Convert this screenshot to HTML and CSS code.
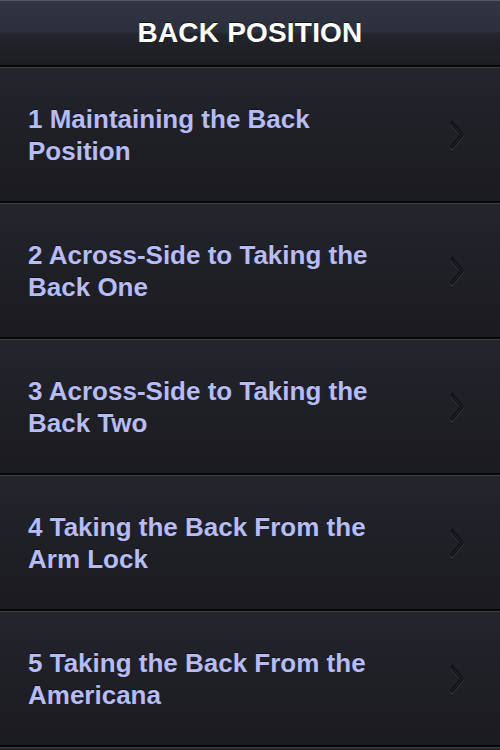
FILE: index.html
```html
<!DOCTYPE html>
<html>
<head>
<meta charset="utf-8">
<link rel="stylesheet" href="styles.css">
</head>
<body>
<div class="screen">
  <header class="navbar"><h1 class="title">BACK POSITION</h1></header>
  <ul class="list">
    <li class="row"><span class="label">1 Maintaining the Back Position</span>
      <svg class="chev" width="18" height="30" viewBox="0 0 18 30"><path d="M4 3 L14 15 L4 27" fill="none" stroke="#3a3b43" stroke-width="4" stroke-linecap="round" stroke-linejoin="round" transform="translate(0 1)"/><path d="M4 3 L14 15 L4 27" fill="none" stroke="#0f0f12" stroke-width="3.6" stroke-linecap="round" stroke-linejoin="round"/><path d="M4 3 L14 15 L4 27" fill="none" stroke="#202126" stroke-width="1.4" stroke-linecap="round" stroke-linejoin="round"/></svg></li>
    <li class="row"><span class="label">2 Across-Side to Taking the Back One</span>
      <svg class="chev" width="18" height="30" viewBox="0 0 18 30"><path d="M4 3 L14 15 L4 27" fill="none" stroke="#3a3b43" stroke-width="4" stroke-linecap="round" stroke-linejoin="round" transform="translate(0 1)"/><path d="M4 3 L14 15 L4 27" fill="none" stroke="#0f0f12" stroke-width="3.6" stroke-linecap="round" stroke-linejoin="round"/><path d="M4 3 L14 15 L4 27" fill="none" stroke="#202126" stroke-width="1.4" stroke-linecap="round" stroke-linejoin="round"/></svg></li>
    <li class="row"><span class="label">3 Across-Side to Taking the Back Two</span>
      <svg class="chev" width="18" height="30" viewBox="0 0 18 30"><path d="M4 3 L14 15 L4 27" fill="none" stroke="#3a3b43" stroke-width="4" stroke-linecap="round" stroke-linejoin="round" transform="translate(0 1)"/><path d="M4 3 L14 15 L4 27" fill="none" stroke="#0f0f12" stroke-width="3.6" stroke-linecap="round" stroke-linejoin="round"/><path d="M4 3 L14 15 L4 27" fill="none" stroke="#202126" stroke-width="1.4" stroke-linecap="round" stroke-linejoin="round"/></svg></li>
    <li class="row"><span class="label">4 Taking the Back From the Arm Lock</span>
      <svg class="chev" width="18" height="30" viewBox="0 0 18 30"><path d="M4 3 L14 15 L4 27" fill="none" stroke="#3a3b43" stroke-width="4" stroke-linecap="round" stroke-linejoin="round" transform="translate(0 1)"/><path d="M4 3 L14 15 L4 27" fill="none" stroke="#0f0f12" stroke-width="3.6" stroke-linecap="round" stroke-linejoin="round"/><path d="M4 3 L14 15 L4 27" fill="none" stroke="#202126" stroke-width="1.4" stroke-linecap="round" stroke-linejoin="round"/></svg></li>
    <li class="row"><span class="label">5 Taking the Back From the Americana</span>
      <svg class="chev" width="18" height="30" viewBox="0 0 18 30"><path d="M4 3 L14 15 L4 27" fill="none" stroke="#3a3b43" stroke-width="4" stroke-linecap="round" stroke-linejoin="round" transform="translate(0 1)"/><path d="M4 3 L14 15 L4 27" fill="none" stroke="#0f0f12" stroke-width="3.6" stroke-linecap="round" stroke-linejoin="round"/><path d="M4 3 L14 15 L4 27" fill="none" stroke="#202126" stroke-width="1.4" stroke-linecap="round" stroke-linejoin="round"/></svg></li>
    <li class="row"><span class="label">&nbsp;</span></li>
  </ul>
</div>
</body>
</html>
```
FILE: styles.css
```css
html, body {
  margin: 0;
  padding: 0;
  background: #1c1c20;
}
.screen {
  width: 500px;
  height: 750px;
  overflow: hidden;
  font-family: "Liberation Sans", Arial, sans-serif;
}
.navbar {
  height: 64px;
  border-top: 1px solid #565866;
  border-bottom: 2px solid #060607;
  background: linear-gradient(#313543 0%, #2c2f3c 48%, #24252c 52%, #1c1d21 100%);
  display: flex;
  align-items: center;
  justify-content: center;
}
.title {
  margin: 0;
  color: #ffffff;
  font-size: 28px;
  font-weight: bold;
  letter-spacing: 0.2px;
  text-shadow: 0 -1px 0 rgba(0,0,0,0.6);
}
.list {
  list-style: none;
  margin: 0;
  padding: 0;
}
.row {
  height: 133px;
  border-top: 1px solid #3f4048;
  border-bottom: 2px solid #060607;
  background: linear-gradient(#24252d 0%, #1f2026 50%, #1b1b1f 100%);
  display: flex;
  align-items: center;
  justify-content: space-between;
  padding: 0 28px 0 28px;
  box-sizing: content-box;
}
.label {
  color: #b6bcf7;
  font-size: 26px;
  font-weight: bold;
  line-height: 32px;
  max-width: 380px;
  text-shadow: 0 -1px 0 rgba(0,0,0,0.5);
}
.chev {
  flex: none;
  margin-right: 6px;
}
```
